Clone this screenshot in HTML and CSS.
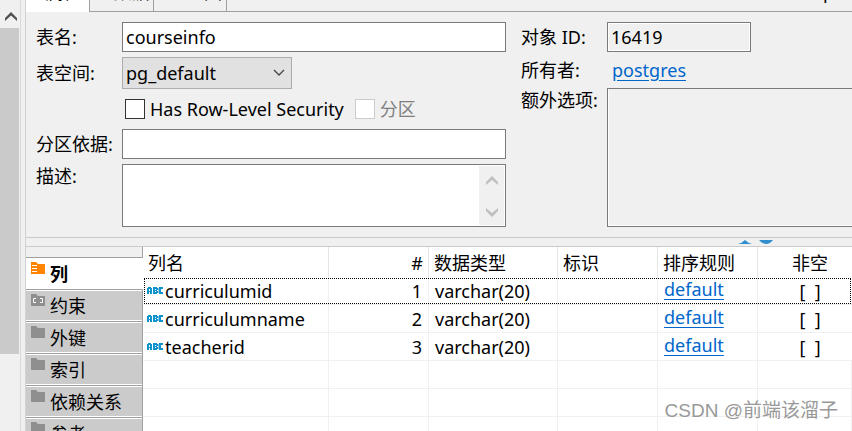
FILE: index.html
```html
<!DOCTYPE html>
<html lang="zh-CN">
<head>
  <meta charset="UTF-8">
  <title>courseinfo</title>
  <link rel="stylesheet" href="styles.css">
</head>
<body>
  <div class="side-scroll">
    <button class="scroll-up" type="button" aria-label="Scroll up">
      <svg width="12" height="10" viewBox="0 0 12 10"><path d="M0 6 L6 0 L12 6 V9 L6 3.5 L0 9 Z" fill="#505050"/></svg>
    </button>
    <div class="scroll-thumb"></div>
  </div>

  <main class="editor">
    <nav class="tabs">
      <button class="tab tab-active" type="button">属性</button>
      <button class="tab tab-data" type="button">数据</button>
      <button class="tab tab-er" type="button">ER 图</button>
      <span class="tab-path">p</span>
    </nav>

    <form class="properties">
      <div class="left">
        <label for="name">表名:</label>
        <input id="name" class="field" type="text" value="courseinfo">

        <label for="space">表空间:</label>
        <div class="select-wrap">
          <select id="space">
            <option>pg_default</option>
          </select>
          <svg class="arrow" width="12" height="8" viewBox="0 0 12 8"><path d="M1 1 L6 6 L11 1" fill="none" stroke="#444" stroke-width="1.3"/></svg>
        </div>

        <div class="checks">
          <label class="check"><input type="checkbox">Has Row-Level Security</label>
          <label class="check disabled"><input type="checkbox" disabled>分区</label>
        </div>

        <label for="partition">分区依据:</label>
        <input id="partition" class="field" type="text">

        <label class="top" for="desc">描述:</label>
        <div class="area">
          <textarea id="desc"></textarea>
          <div class="area-scroll">
            <svg width="12" height="9" viewBox="0 0 12 9"><path d="M0 6 L6 0 L12 6 V9 L6 4 L0 9 Z" fill="#bfbfbf"/></svg>
            <svg width="12" height="9" viewBox="0 0 12 9"><path d="M0 3 L6 9 L12 3 V0 L6 5 L0 0 Z" fill="#bfbfbf"/></svg>
          </div>
        </div>
      </div>

      <div class="right">
        <label for="oid">对象 ID:</label>
        <input id="oid" class="field readonly" type="text" value="16419" readonly>
        <span>所有者:</span>
        <a class="owner" href="#">postgres</a>
        <label class="top" for="extra">额外选项:</label>
        <textarea id="extra" class="extra" readonly></textarea>
      </div>
    </form>

    <div class="sash">
      <svg width="14" height="4" viewBox="0 0 14 4"><path d="M0 4 Q4 3 7 0 Q10 3 14 4 Z" fill="#318fd0"/></svg>
      <svg width="14" height="4" viewBox="0 0 14 4"><path d="M0 0 H14 Q11 4 7 4 Q3 4 0 0 Z" fill="#318fd0"/></svg>
    </div>

    <div class="details">
      <nav class="folders">
        <button class="folder active" type="button">
          <svg width="14" height="12" viewBox="0 0 14 12"><path d="M0 0 H5 L7 2 H14 V12 H0 Z" fill="#ff8400"/><path d="M1 3 H6 V4 H1 Z M1 6 H6 V7 H1 Z M1 9 H6 V10 H1 Z" fill="#fff"/></svg>
          列
        </button>
        <button class="folder" type="button">
          <svg width="14" height="12" viewBox="0 0 14 12"><path d="M0 0 H5 L7 2 H14 V12 H0 Z" fill="#8f8f8f"/><path d="M5 4.5 H2.5 V8.5 H5 M9 4.5 H11.5 V8.5 H9" fill="none" stroke="#fff"/></svg>
          约束
        </button>
        <button class="folder" type="button">
          <svg width="14" height="12" viewBox="0 0 14 12"><path d="M0 0 H5 L7 2 H14 V12 H0 Z" fill="#8f8f8f"/></svg>
          外键
        </button>
        <button class="folder" type="button">
          <svg width="14" height="12" viewBox="0 0 14 12"><path d="M0 0 H5 L7 2 H14 V12 H0 Z" fill="#8f8f8f"/></svg>
          索引
        </button>
        <button class="folder" type="button">
          <svg width="14" height="12" viewBox="0 0 14 12"><path d="M0 0 H5 L7 2 H14 V12 H0 Z" fill="#8f8f8f"/></svg>
          依赖关系
        </button>
        <button class="folder" type="button">
          <svg width="14" height="12" viewBox="0 0 14 12"><path d="M0 0 H5 L7 2 H14 V12 H0 Z" fill="#8f8f8f"/></svg>
          参考
        </button>
      </nav>

      <table class="columns">
        <colgroup>
          <col class="col-name"><col class="col"><col class="col-type"><col class="col"><col class="col"><col>
        </colgroup>
        <thead>
          <tr><th>列名</th><th class="num">#</th><th>数据类型</th><th>标识</th><th>排序规则</th><th class="center">非空</th></tr>
        </thead>
        <tbody>
          <tr class="focused">
            <td class="name"><svg class="abc" width="16" height="7" viewBox="0 0 16 7"><use href="#abc"/></svg>curriculumid</td>
            <td class="num">1</td><td>varchar(20)</td><td></td><td class="link"><a href="#">default</a></td><td class="center">[&nbsp; ]</td>
          </tr>
          <tr>
            <td class="name"><svg class="abc" width="16" height="7" viewBox="0 0 16 7"><use href="#abc"/></svg>curriculumname</td>
            <td class="num">2</td><td>varchar(20)</td><td></td><td class="link"><a href="#">default</a></td><td class="center">[&nbsp; ]</td>
          </tr>
          <tr>
            <td class="name"><svg class="abc" width="16" height="7" viewBox="0 0 16 7"><use href="#abc"/></svg>teacherid</td>
            <td class="num">3</td><td>varchar(20)</td><td></td><td class="link"><a href="#">default</a></td><td class="center">[&nbsp; ]</td>
          </tr>
          <tr><td></td><td></td><td></td><td></td><td></td><td></td></tr>
          <tr><td></td><td></td><td></td><td></td><td></td><td></td></tr>
          <tr><td></td><td></td><td></td><td></td><td></td><td></td></tr>
        </tbody>
      </table>
    </div>
  </main>

  <div class="watermark">CSDN @前端该溜子</div>

  <!-- string type icon -->
  <svg class="defs" width="0" height="0">
    <symbol id="abc" viewBox="0 0 16 7">
      <path fill="#0e93d0" fill-rule="evenodd" d="M1 0 H4 V1 H5 V7 H3 V5 H2 V7 H0 V1 H1 Z M2 2 V4 H3 V2 Z M6 0 H10 V1 H11 V3 H10 V4 H11 V6 H10 V7 H6 Z M8 2 V3 H9 V2 Z M8 4 V5 H9 V4 Z M12 0 H16 V2 H14 V5 H16 V7 H12 V6 H11.5 V1 H12 Z"/>
    </symbol>
  </svg>
</body>
</html>
```

FILE: styles.css
```css
* {
  box-sizing: border-box;
}

body {
  margin: 0;
  height: 100vh;
  display: flex;
  overflow: hidden;
  background: #f0f0f0;
  color: #000;
  font: 18px/24px "Noto Sans", "Noto Sans CJK SC", sans-serif;
}

button,
input,
select,
textarea {
  margin: 0;
  font: inherit;
  color: inherit;
  border-radius: 0;
}

a {
  color: #0066cc;
  text-underline-offset: 3px;
}

.side-scroll {
  flex: none;
  width: 21px;
  border-right: 1px solid #d9d9d9;
}

.scroll-up {
  display: block;
  width: 19px;
  height: 28px;
  padding: 6px 0 0 2px;
  border: 0;
  background: none;
  line-height: 0;
}

.scroll-thumb {
  width: 19px;
  height: calc(76vh - 2px);
  background: #cacaca;
}

.editor {
  flex: 1;
  min-width: 0;
  margin-left: 4px;
  display: flex;
  flex-direction: column;
  border-left: 1px solid #d2d2d2;
}

/* scrolled: only the lower edge of the tabs is in view */
.tabs {
  flex: none;
  display: flex;
  align-items: flex-end;
  height: 12px;
  overflow: hidden;
  box-shadow: inset 0 -1px #a0a0a0;
}

.tab {
  padding: 0 0 8px;
  border: 0;
  border-right: 1px solid #a0a0a0;
  background: none;
  text-align: center;
}

.tab-active {
  width: 64px;
  padding-left: 12px;
  background: #fff;
}

.tab-data {
  width: 64px;
  padding-left: 20px;
}

.tab-er {
  width: 73px;
  padding-left: 20px;
}

.tab-path {
  margin-left: auto;
  padding: 0 18px 8px 0;
}

.properties {
  flex: none;
  display: grid;
  grid-template-columns: 470px 1fr;
  gap: 15px;
  padding: 10px 0 10px 10px;
}

.left {
  display: grid;
  grid-template-columns: 78px 1fr;
  grid-template-rows: 30px 32px 30px 30px 63px;
  column-gap: 8px;
  row-gap: 5px;
  align-items: center;
}

.left .top,
.right .top {
  align-self: start;
}

.left label,
.right label {
  white-space: nowrap;
}

.field {
  width: 100%;
  height: 30px;
  padding: 0 3px;
  border: 1px solid #7a7a7a;
  background: #fff;
}

.select-wrap {
  position: relative;
  width: 170px;
}

.select-wrap select {
  display: block;
  width: 100%;
  height: 32px;
  padding: 0 3px;
  border: 1px solid #adadad;
  background: #e1e1e1;
  appearance: none;
}

.arrow {
  position: absolute;
  right: 7px;
  top: 12px;
  pointer-events: none;
}

.checks {
  grid-column: 2;
  display: flex;
  gap: 11px;
  padding-left: 3px;
}

.check {
  display: flex;
  align-items: center;
  gap: 5px;
}

.check input {
  appearance: none;
  width: 20px;
  height: 20px;
  border: 1px solid #333;
  background: #fff;
}

.check.disabled {
  color: #808080;
}

.check.disabled input {
  border-color: #ccc;
}

.area {
  display: flex;
  height: 63px;
  padding: 1px;
  border: 1px solid #7a7a7a;
  background: #fff;
}

.area textarea {
  flex: 1;
  border: 0;
  padding: 2px;
  resize: none;
}

.area-scroll {
  width: 25px;
  display: flex;
  flex-direction: column;
  align-items: center;
  justify-content: space-between;
  padding: 10px 0 8px;
  background: #f0f0f0;
}

.right {
  display: grid;
  grid-template-columns: 86px 1fr;
  grid-template-rows: 30px 26px 139px;
  row-gap: 5px;
  align-items: center;
  align-content: start;
}

.readonly {
  width: 144px;
  background: #f0f0f0;
  box-shadow: inset 0 0 0 1px #fff;
}

.owner {
  padding-left: 5px;
}

.extra {
  display: block;
  width: 100%;
  height: 139px;
  border: 1px solid #7a7a7a;
  border-right: 0;
  background: #f0f0f0;
  box-shadow: inset 1px -1px 0 #fff;
  resize: none;
}

.sash {
  flex: none;
  display: flex;
  justify-content: flex-end;
  gap: 7px;
  height: 10px;
  padding: 2px 79px 0 0;
  border: 1px solid #cacaca;
  border-width: 1px 0;
}

.details {
  flex: 1;
  min-height: 0;
  display: flex;
  overflow: hidden;
}

.folders {
  flex: none;
  width: 117px;
  padding-top: 10px;
  border-right: 1px solid #a0a0a0;
}

.folder {
  display: flex;
  gap: 5px;
  width: 100%;
  height: 32px;
  padding: 4px 5px 0;
  border: 0;
  border-top: 1px solid #a0a0a0;
  background: #cbcbcb;
  box-shadow: inset 0 1px #fff, inset 0 -1px #fff;
  text-align: left;
}

.folder svg {
  flex: none;
}

.folder.active {
  width: 117px;
  background: #fff;
  font-weight: bold;
}

.columns {
  flex: 1;
  align-self: flex-start;
  table-layout: fixed;
  border-collapse: separate;
  border-spacing: 0;
  background: #fff;
}

.col-name {
  width: 186px;
}

.col {
  width: 100px;
}

.col-type {
  width: 129px;
}

.columns th,
.columns td {
  height: 28px;
  padding: 0 6px;
  border: 1px solid #f0f0f0;
  border-width: 0 1px 1px 0;
  text-align: left;
  font-weight: normal;
  white-space: nowrap;
}

.columns th {
  height: 30px;
  padding: 2px 5px 0;
  border-color: #e5e5e5;
  border-bottom: 0;
}

.columns .name {
  padding-left: 4px;
}

.columns .link {
  padding-bottom: 3px;
}

.columns .num {
  text-align: right;
}

.columns .center {
  padding-left: 10px;
  padding-right: 0;
  border-right: 0;
  text-align: center;
}

.columns .focused {
  outline: 1px dotted #000;
  outline-offset: -2px;
}

.abc {
  margin: 0 2px 4px 0;
}

.watermark {
  position: absolute;
  right: 14px;
  bottom: 8px;
  color: #999;
  font: 19px/24px "Liberation Sans", "Noto Sans CJK SC", sans-serif;
}

.defs {
  position: absolute;
}
```
